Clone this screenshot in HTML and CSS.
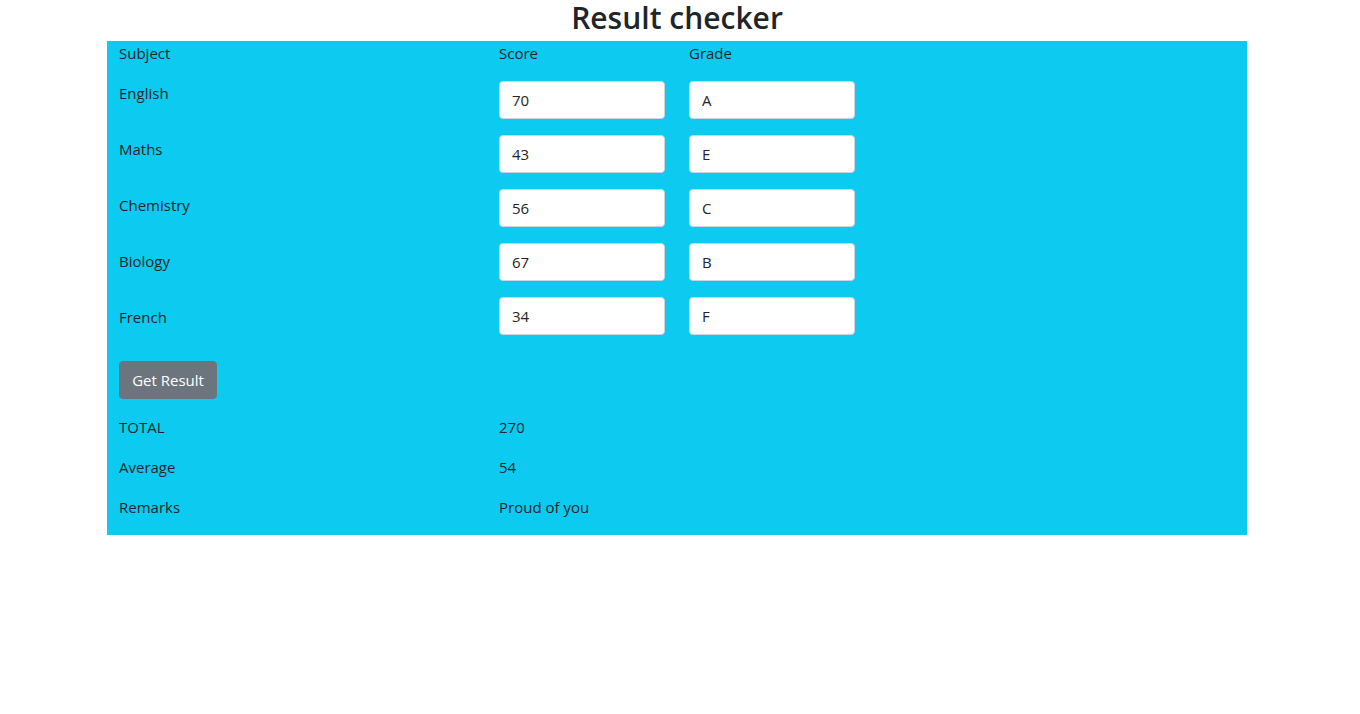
FILE: index.html
```html
<!DOCTYPE html>
<html lang="en">
<head>
<meta charset="utf-8">
<title>Result checker</title>
<link rel="stylesheet" href="styles.css">
</head>
<body>
<div class="page">
  <h1 class="title">Result checker</h1>
  <section class="panel">
    <div class="grid">
      <div class="col col-subject">
        <div class="head">Subject</div>
        <div class="label">English</div>
        <div class="label">Maths</div>
        <div class="label">Chemistry</div>
        <div class="label">Biology</div>
        <div class="label">French</div>
      </div>
      <div class="col col-score">
        <div class="head">Score</div>
        <input class="field" type="text" value="70">
        <input class="field" type="text" value="43">
        <input class="field" type="text" value="56">
        <input class="field" type="text" value="67">
        <input class="field" type="text" value="34">
      </div>
      <div class="col col-grade">
        <div class="head">Grade</div>
        <input class="field" type="text" value="A">
        <input class="field" type="text" value="E">
        <input class="field" type="text" value="C">
        <input class="field" type="text" value="B">
        <input class="field" type="text" value="F">
      </div>
    </div>
    <button class="btn" type="button">Get Result</button>
    <div class="summary">
      <div class="sum-row"><span class="sum-key">TOTAL</span><span>270</span></div>
      <div class="sum-row"><span class="sum-key">Average</span><span>54</span></div>
      <div class="sum-row"><span class="sum-key">Remarks</span><span>Proud of you</span></div>
    </div>
  </section>
</div>
</body>
</html>
```

FILE: styles.css
```css
* { box-sizing: border-box; }
html, body { margin: 0; padding: 0; background: #fff; }
body {
  font-family: "Open Sans", "Noto Sans", sans-serif;
  font-size: 15px;
  line-height: 24px;
  color: #212529;
}
.page {
  width: 1140px;
  margin-left: 107px;
}
.title {
  margin: 0;
  height: 41px;
  padding-top: 2px;
  line-height: 32px;
  font-size: 30px;
  font-weight: 600;
  text-align: center;
  color: #212529;
}
.panel {
  background: #0dcaf0;
  padding: 0 12px 16px;
}
.grid { display: flex; }
.col { display: flex; flex-direction: column; }
.col-subject { width: 380px; gap: 32px; }
.col-subject .head { margin-bottom: -16px; }
.col-score, .col-grade { width: 190px; gap: 16px; }
.head { height: 24px; }
.label { height: 24px; }
.field {
  width: 166px;
  height: 38px;
  border: 1px solid #ced4da;
  border-radius: 4px;
  background: #fff;
  padding: 0 12px;
  font: inherit;
  color: #212529;
  outline: none;
}
.btn {
  display: block;
  margin-top: 26px;
  height: 38px;
  width: 98px;
  padding: 0;
  border: 1px solid #6c757d;
  border-radius: 4px;
  background: #6c757d;
  color: #fff;
  font: inherit;
}
.summary {
  margin-top: 16px;
  display: flex;
  flex-direction: column;
  gap: 16px;
}
.sum-row { display: flex; height: 24px; }
.sum-key { width: 380px; }
```
